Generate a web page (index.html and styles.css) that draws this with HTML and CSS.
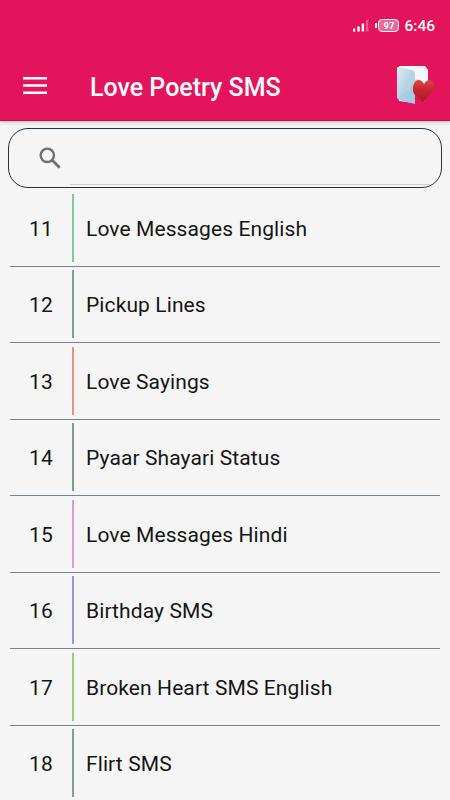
FILE: index.html
```html
<!DOCTYPE html>
<html lang="en">
<head>
    <meta charset="UTF-8">
    <meta name="viewport" content="width=device-width, initial-scale=1.0">
    <title>Love Poetry SMS</title>
    <link rel="stylesheet" href="styles.css">
</head>
<body>
    <header class="header">
        <div class="status-bar">
            <svg class="signal" width="16" height="13" viewBox="0 0 16 13">
                <path d="M0 9.500h2.200V12.500H0zM4.300 7.500h2.400V12.500H4.300zM8.700 4.500h2.400V12.500H8.700z" fill="#fff"/>
                <path d="M13 1h2.400v11.500H13z" fill="#fff" opacity=".3"/>
            </svg>
            <div class="battery">
                <span class="battery-tip"></span>
                <span class="battery-level">97</span>
            </div>
            <span class="clock">6:46</span>
        </div>
        <div class="toolbar">
            <svg class="menu-icon" width="24" height="18" viewBox="0 0 24 18">
                <path d="M0 0h24v2.600H0zM0 7.200h24v2.600H0zM0 14.400h24V17H0z" fill="#fff"/>
            </svg>
            <h1 class="title">Love Poetry SMS</h1>
            <svg class="folder-icon" width="40" height="42" viewBox="0 0 40 42">
                <defs>
                    <linearGradient id="folder" x1="0" y1="0" x2="1" y2="1">
                        <stop offset="0" stop-color="#e0edf3"/>
                        <stop offset=".5" stop-color="#b5d3e5"/>
                        <stop offset="1" stop-color="#a5cbe5"/>
                    </linearGradient>
                    <linearGradient id="heart" x1="0" y1="0" x2="0" y2="1">
                        <stop offset="0" stop-color="#d84848"/>
                        <stop offset=".4" stop-color="#c92630"/>
                        <stop offset="1" stop-color="#b01525"/>
                    </linearGradient>
                </defs>
                <path d="M4 1h26l3 4v16H31v17H19L4 36z" fill="#f4f7fa"/>
                <path d="M30 1v4h3z" fill="#c9dce8"/>
                <path d="M19 16c2-2 5-2 8 1v5h-8z" fill="#e8c6cc"/>
                <path d="M3 2l14 3q3 1 3 4v30L4 35q-2-1-2-3V3q0-1 1-1z" fill="url(#folder)"/>
                <path d="M2.500 34L19 20v18.500L4 35z" fill="#8fc3e8" opacity=".3"/>
                <path d="M20 27l8 9v3h-8zM28 39h4v-9z" fill="#e4145c"/>
                <path d="M28 39c-1-5-5-6-8-9-4-4-2-14 3-15 3 0 5 2 6 4 2-4 6-5 9-2 3 4 1 8-2 12-3 3-6 5-8 10z" fill="url(#heart)"/>
            </svg>
        </div>
    </header>

    <main class="content">
        <div class="search-box">
            <svg class="search-icon" width="23" height="23" viewBox="0 0 23 23" fill="none" stroke="#6f6f6f">
                <circle cx="8.300" cy="8.300" r="6.700" stroke-width="2.400"/>
                <path d="M13.300 13.300l7.400 7.400" stroke-width="2.800"/>
            </svg>
            <div class="search-field"></div>
        </div>

        <ul class="list">
            <li class="row"><span class="number">11</span><span class="bar green"></span><span class="name">Love Messages English</span></li>
            <li class="row"><span class="number">12</span><span class="bar teal"></span><span class="name">Pickup Lines</span></li>
            <li class="row"><span class="number">13</span><span class="bar red"></span><span class="name">Love Sayings</span></li>
            <li class="row"><span class="number">14</span><span class="bar dark-green"></span><span class="name">Pyaar Shayari Status</span></li>
            <li class="row"><span class="number">15</span><span class="bar pink"></span><span class="name">Love Messages Hindi</span></li>
            <li class="row"><span class="number">16</span><span class="bar blue"></span><span class="name">Birthday SMS</span></li>
            <li class="row"><span class="number">17</span><span class="bar lime"></span><span class="name">Broken Heart SMS English</span></li>
            <li class="row"><span class="number">18</span><span class="bar teal"></span><span class="name">Flirt SMS</span></li>
        </ul>
    </main>
</body>
</html>
```

FILE: styles.css
```css
* {
    box-sizing: border-box;
}

body {
    margin: 0;
    height: 800px;
    overflow: hidden;
    display: flex;
    flex-direction: column;
    background-color: #f5f5f5;
    color: #151515;
    font-family: Roboto, "Liberation Sans", sans-serif;
}

.header {
    flex: none;
    height: 121px;
    background-color: #e4145c;
    border-bottom: 1px solid #e2004f;
    box-shadow: 0 1px 4px rgba(0, 0, 0, 0.25);
    color: #fff;
}

/* Status bar */
.status-bar {
    height: 51px;
    padding-right: 15px;
    display: flex;
    justify-content: flex-end;
    align-items: center;
}

.signal {
    margin-right: 6px;
}

.battery {
    display: flex;
    align-items: center;
    gap: 1px;
    margin-right: 5px;
}

.battery-tip {
    width: 2px;
    height: 5px;
    background-color: #fff;
}

.battery-level {
    width: 21px;
    height: 13px;
    border: 1.5px solid #fff;
    border-radius: 4px;
    background-color: rgba(255, 255, 255, 0.35);
    font-size: 9.5px;
    font-weight: 700;
    line-height: 11px;
    text-align: center;
}

.clock {
    font-size: 15.5px;
    font-weight: 500;
}

/* Toolbar */
.toolbar {
    height: 69px;
    padding: 0 15px 0 23px;
    display: flex;
    align-items: center;
}

.title {
    flex: 1;
    margin: 4px 0 0 43px;
    font-size: 25px;
    font-weight: 500;
    line-height: 30px;
}

/* Search */
.content {
    padding: 7px 8px 0;
}

.search-box {
    height: 60px;
    border: 1px solid #26323c;
    border-radius: 20px;
    padding: 0 11px 2px 30px;
    display: flex;
}

.search-icon {
    flex: none;
    margin-top: 18px;
}

.search-field {
    flex: 1;
    margin-left: 8px;
    border-bottom: 1px solid #cfcfcf;
}

/* List */
.list {
    list-style: none;
    margin: 2px 2px 0;
    padding: 0;
}

.row {
    height: 76.5px;
    border-bottom: 1px solid #77848a;
    display: flex;
    align-items: center;
    font-size: 21px;
    letter-spacing: 0.1px;
}

.number {
    width: 62px;
    padding-top: 2px;
    text-align: center;
}

.bar {
    width: 2px;
    height: 68px;
}

.name {
    margin-left: 12px;
    padding-top: 2px;
}

.green { background-color: #86c5a4; }
.teal { background-color: #829f9c; }
.red { background-color: #e99085; }
.dark-green { background-color: #7f9c8c; }
.pink { background-color: #dba0cc; }
.blue { background-color: #9797d6; }
.lime { background-color: #98cb82; }
```
